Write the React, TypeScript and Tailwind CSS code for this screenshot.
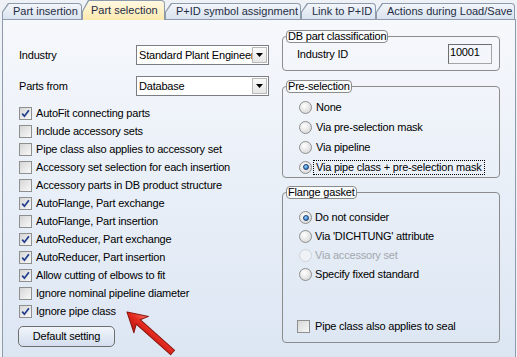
import clsx from 'clsx';

const checks: { label: string; on: boolean }[] = [
  { label: 'AutoFit connecting parts', on: true },
  { label: 'Include accessory sets', on: false },
  { label: 'Pipe class also applies to accessory set', on: false },
  { label: 'Accessory set selection for each insertion', on: false },
  { label: 'Accessory parts in DB product structure', on: false },
  { label: 'AutoFlange, Part exchange', on: true },
  { label: 'AutoFlange, Part insertion', on: false },
  { label: 'AutoReducer, Part exchange', on: true },
  { label: 'AutoReducer, Part insertion', on: true },
  { label: 'Allow cutting of elbows to fit', on: true },
  { label: 'Ignore nominal pipeline diameter', on: false },
  { label: 'Ignore pipe class', on: true },
];

const tabs = [
  { label: 'Part insertion', w: 'w-[80px]', active: false },
  { label: 'Part selection', w: 'w-[83px]', active: true },
  { label: 'P+ID symbol assignment', w: 'w-[136px]', active: false },
  { label: 'Link to P+ID', w: 'w-[75px]', active: false },
  { label: 'Actions during Load/Save', w: 'w-[139px]', active: false },
];

const CheckBox = ({ on }: { on: boolean }) => (
  <span className="relative flex h-[13px] w-[13px] shrink-0 border border-[#8e8f8f] bg-linear-to-br from-[#d6d6d6] to-[#f8f8f8]">
    {on && (
      <svg viewBox="0 0 11 11" className="absolute inset-0 h-[11px] w-[11px]">
        <path d="M2.2 5.6 L4.4 8.2 L8.9 2.2" stroke="#1f3b8c" strokeWidth="1.7" fill="none" />
      </svg>
    )}
  </span>
);

const Radio = ({ on, disabled }: { on?: boolean; disabled?: boolean }) => (
  <span
    className={clsx(
      'flex h-[13px] w-[13px] shrink-0 items-center justify-center rounded-full border',
      disabled
        ? 'border-[#cfd3d8] bg-[#eef1f5]'
        : 'border-[#8e8f8f] bg-[radial-gradient(circle_at_40%_35%,#ffffff,#cfcfcf)]'
    )}
  >
    {on && (
      <span className="h-[6px] w-[6px] rounded-full border border-[#1b3f73] bg-[radial-gradient(circle_at_40%_35%,#9ad4ff,#1360b4)]" />
    )}
  </span>
);

const Legend = ({ children }: { children: string }) => (
  <legend className="ml-[3px] rounded-[4px] border border-[#8c8c8c] bg-[#f9fbfd] px-[1px] text-[11px] leading-[11px]">
    {children}
  </legend>
);

const Combo = ({ value }: { value: string }) => (
  <div className="flex h-[20px] w-[133px] items-center border border-[#7a7d84] bg-white">
    <span className="flex-1 overflow-hidden whitespace-nowrap pl-[2px]">{value}</span>
    <span className="mr-px flex h-[16px] w-[15px] shrink-0 items-center justify-center border border-[#b9b9b9] bg-linear-to-b from-[#fafafa] to-[#e6e6e6]">
      <svg viewBox="0 0 7 4" className="h-[4px] w-[7px]">
        <path d="M0 0 H7 L3.5 4 Z" fill="#000" />
      </svg>
    </span>
  </div>
);

export default function App() {
  return (
    <div className="relative flex h-[357px] w-[517px] flex-col overflow-hidden bg-[#eef1f5] font-['Liberation_Sans',Arial,sans-serif] text-[11px] leading-none tracking-[-0.2px] text-black">
      {/* tab strip */}
      <div className="relative z-10 flex h-[20px] items-end pl-[2px]">
        {tabs.map((t) => (
          <div
            key={t.label}
            className={clsx(
              'shrink-0 bg-[#8d9aab] px-px pt-px [clip-path:polygon(0_100%,0_55%,6px_0,100%_0,100%_100%)] rounded-tr-[4px]',
              t.w,
              t.active ? 'mb-[-1px] h-[20px]' : 'h-[16px] pb-0'
            )}
          >
            <div
              className={clsx(
                'flex h-full items-center whitespace-nowrap tracking-normal text-[#1e2d45] [clip-path:polygon(0_100%,0_55%,6px_0,100%_0,100%_100%)] rounded-tr-[3px]',
                t.active
                  ? 'bg-linear-to-b from-[#fff9e2] to-[#fde9ad] pl-[8px]'
                  : 'bg-linear-to-b from-[#f3f6fa] to-[#d9e2ee] pl-[10px]'
              )}
            >
              {t.label}
            </div>
          </div>
        ))}
      </div>

      {/* page */}
      <div className="ml-[2px] flex h-[340px] w-[514px] shrink-0 border border-[#8e9bab] bg-linear-to-b from-[#f6f8fc] to-[#dce6f3]">
        {/* left column */}
        <div className="flex w-[279px] shrink-0 flex-col pl-[16px] pt-[25px]">
          <div className="flex h-[20px] items-center">
            <span className="w-[117px]">Industry</span>
            <Combo value="Standard Plant Engineering" />
          </div>
          <div className="mt-[11px] flex h-[20px] items-center">
            <span className="w-[117px]">Parts from</span>
            <Combo value="Database" />
          </div>

          <div className="mt-[8px] flex flex-col">
            {checks.map((c) => (
              <div key={c.label} className="flex h-[18px] items-center gap-[4px] whitespace-nowrap">
                <CheckBox on={c.on} />
                <span>{c.label}</span>
              </div>
            ))}
          </div>

          <button className="mt-[6px] flex h-[21px] w-[97px] items-center justify-center rounded-[5px] border border-[#6f6f6f] bg-linear-to-b from-[#f1f5fb] to-[#d3deee] -ml-px">
            Default setting
          </button>
        </div>

        {/* right column */}
        <div className="flex w-[218px] shrink-0 flex-col pt-[10px]">
          <fieldset className="rounded-[4px] border border-[#8c8c8c] pb-[6px] pt-[1px]">
            <Legend>DB part classification</Legend>
            <div className="flex items-center justify-between pl-[14px] pr-[7px]">
              <span>Industry ID</span>
              <span className="flex h-[20px] w-[44px] items-start border border-[#a5a5a5] border-l-[#6e6e6e] border-t-[#6e6e6e] bg-[#f3f6fa] pl-[1px] pt-[2px]">
                10001
              </span>
            </div>
          </fieldset>

          <fieldset className="mt-[9px] rounded-[4px] border border-[#8c8c8c] pt-[4px]">
            <Legend>Pre-selection</Legend>
            {[
              { label: 'None', on: false },
              { label: 'Via pre-selection mask', on: false },
              { label: 'Via pipeline', on: false },
              { label: 'Via pipe class + pre-selection mask', on: true },
            ].map((r) => (
              <div key={r.label} className="flex h-[20px] items-center gap-[1px] pl-[16px] whitespace-nowrap">
                <Radio on={r.on} />
                <span
                  className={clsx(
                    'border px-[2px] py-[1px]',
                    r.on ? 'border-dotted border-black' : 'border-transparent'
                  )}
                >
                  {r.label}
                </span>
              </div>
            ))}
          </fieldset>

          <fieldset className="mt-[8px] rounded-[4px] border border-[#8c8c8c] pb-[7px] pt-[9px]">
            <Legend>Flange gasket</Legend>
            {[
              { label: 'Do not consider', on: true, disabled: false },
              { label: "Via 'DICHTUNG' attribute", on: false, disabled: false },
              { label: 'Via accessory set', on: false, disabled: true },
              { label: 'Specify fixed standard', on: false, disabled: false },
            ].map((r) => (
              <div key={r.label} className="flex h-[19px] items-center gap-[3px] pl-[16px] whitespace-nowrap">
                <Radio on={r.on} disabled={r.disabled} />
                <span className={clsx(r.disabled && 'text-[#a3a8ae]')}>{r.label}</span>
              </div>
            ))}
            <div className="mt-[33px] flex h-[18px] items-center gap-[5px] pl-[14px] whitespace-nowrap">
              <CheckBox on={false} />
              <span>Pipe class also applies to seal</span>
            </div>
          </fieldset>
        </div>
      </div>

      {/* red annotation arrow */}
      <svg className="pointer-events-none absolute left-0 top-0 h-[357px] w-[517px]" viewBox="0 0 517 357">
        <defs>
          <linearGradient id="arrowFill" x1="0" y1="-11" x2="0" y2="11" gradientUnits="userSpaceOnUse">
            <stop offset="0" stopColor="#ff7a6c" />
            <stop offset="0.45" stopColor="#e52a1f" />
            <stop offset="1" stopColor="#b3140c" />
          </linearGradient>
        </defs>
        <g transform="translate(127 312) rotate(41.6)">
          <polygon
            points="0,0 19,-11 15,-3 61,-3 61,3 15,3 19,11"
            fill="url(#arrowFill)"
            stroke="#8a150e"
            strokeWidth="1"
            strokeLinejoin="round"
          />
        </g>
      </svg>
    </div>
  );
}
